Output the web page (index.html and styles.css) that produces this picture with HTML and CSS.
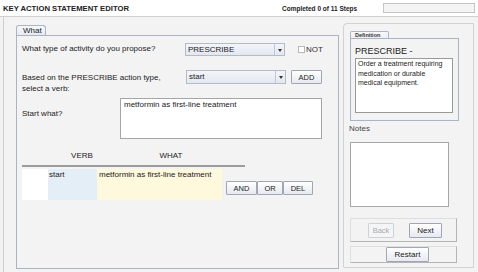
FILE: index.html
```html
<!DOCTYPE html>
<html lang="en">
<head>
    <meta charset="UTF-8">
    <title>Key Action Statement Editor</title>
    <link rel="stylesheet" href="styles.css">
</head>
<body>
    <div class="topbar">
        <div class="app-title">KEY ACTION STATEMENT EDITOR</div>
        <div class="status">Completed 0 of 11 Steps</div>
        <div class="progress"></div>
    </div>

    <div class="frame">
        <div class="main-col">
            <div class="tab">What</div>
            <div class="tab-body">
                <div class="row row-activity">
                    <div class="label">What type of activity do you propose?</div>
                    <div class="select">PRESCRIBE<span class="arrow"></span></div>
                    <label class="check"><span class="box"></span>NOT</label>
                </div>
                <div class="row row-verb">
                    <div class="label">Based on the PRESCRIBE action type,<br>select a verb:</div>
                    <div class="select">start<span class="arrow"></span></div>
                    <button class="btn btn-add">ADD</button>
                </div>
                <div class="row row-what">
                    <div class="label label-what">Start what?</div>
                    <div class="textbox">metformin as first-line treatment</div>
                </div>

                <div class="table-head">
                    <div class="th th-verb">VERB</div>
                    <div class="th th-what">WHAT</div>
                </div>
                <div class="table-row">
                    <div class="cell cell-blank"></div>
                    <div class="cell cell-verb">start</div>
                    <div class="cell cell-what">metformin as first-line treatment</div>
                    <div class="row-btns">
                        <button class="btn btn-and">AND</button>
                        <button class="btn btn-or">OR</button>
                        <button class="btn btn-del">DEL</button>
                    </div>
                </div>
            </div>
        </div>

        <div class="side">
            <div class="def-tab">Definition</div>
            <div class="def-body">
                <div class="def-title">PRESCRIBE -</div>
                <div class="def-text">Order a treatment requiring medication or durable medical equipment.</div>
            </div>
            <div class="notes-label">Notes</div>
            <div class="notes"></div>
            <div class="nav-group">
                <button class="btn btn-back" disabled>Back</button>
                <button class="btn btn-next">Next</button>
            </div>
            <div class="nav-group nav-restart">
                <button class="btn btn-restart">Restart</button>
            </div>
        </div>
    </div>
</body>
</html>
```

FILE: styles.css
```css
/* Global */
body {
    margin: 0;
    font-family: "Liberation Sans", Arial, sans-serif;
    background-color: #f3f3f3;
    color: #222;
    font-size: 8px;
    height: 272px;
    overflow: hidden;
}

button {
    font-family: inherit;
    cursor: pointer;
    margin: 0;
}

/* Top bar */
.topbar {
    display: flex;
    align-items: center;
    height: 16px;
    background: #ffffff;
    border-bottom: 1px solid #d0d0d0;
}

.app-title {
    padding-left: 3px;
    font-size: 7.7px;
    font-weight: bold;
    width: 279px;
}

.status {
    font-size: 6.5px;
    font-weight: bold;
    width: 101px;
}

.progress {
    width: 90px;
    height: 8px;
    border: 1px solid #c4c4c4;
    background: #f4f4f4;
}

/* Frame */
.frame {
    display: flex;
    margin-left: 3px;
    border-left: 1px solid #cfcfcf;
    height: 255px;
}

.main-col {
    padding-left: 12px;
    padding-top: 8px;
}

.tab {
    display: inline-block;
    width: 22px;
    height: 9px;
    padding-left: 6px;
    line-height: 10px;
    font-size: 8px;
    background: linear-gradient(#f6f8fb, #e7ebf1);
    border: 1px solid #a9b4c6;
    border-bottom: none;
    border-radius: 3px 3px 0 0;
    vertical-align: bottom;
}

.tab-body {
    width: 323px;
    height: 234px;
    border: 1px solid #a9b4c6;
    padding-left: 5px;
    box-sizing: border-box;
}

/* Form rows */
.row {
    display: flex;
    align-items: flex-start;
}

.label {
    width: 163px;
    line-height: 11px;
}

.row-activity {
    margin-top: 7px;
}

.row-activity .label {
    margin-top: 0;
}

.row-verb {
    margin-top: 14px;
}

.row-verb .label {
    margin-top: 2px;
}

.row-what {
    margin-top: 4px;
}

.label-what {
    width: 98px;
    margin-top: 10px;
}

.select {
    position: relative;
    width: 96px;
    height: 11px;
    line-height: 11px;
    padding-left: 2px;
    border: 1px solid #b3bacb;
    background: linear-gradient(#f3f5fa, #e3e7f0);
}

.row-verb .select {
    margin-left: 1px;
    height: 12px;
    line-height: 12px;
}

.arrow {
    position: absolute;
    right: 0;
    top: 0;
    bottom: 0;
    width: 9px;
    border-left: 1px solid #c2c7d4;
}

.arrow::after {
    content: "";
    position: absolute;
    left: 3px;
    top: 5px;
    border-left: 2px solid transparent;
    border-right: 2px solid transparent;
    border-top: 3px solid #333;
}

.check {
    display: flex;
    align-items: center;
    margin-left: 13px;
    margin-top: 1px;
    height: 11px;
    color: #333;
}

.box {
    width: 5px;
    height: 5px;
    border: 1px solid #b8b8b8;
    background: #fff;
    margin-right: 1px;
}

.btn {
    height: 14px;
    padding: 0;
    font-size: 7.5px;
    color: #222;
    border: 1px solid #9fa6b6;
    background: linear-gradient(#ffffff, #e6e9f0);
    border-radius: 1px;
}

.btn-add {
    width: 31px;
    margin-left: 5px;
}

.textbox {
    width: 194px;
    height: 37px;
    padding: 1px 3px;
    background: #fff;
    border: 1px solid #a6a6a6;
    line-height: 10px;
}

/* Table */
.table-head {
    display: flex;
    width: 223px;
    margin-top: 11px;
    border-bottom: 2px solid #9c9c9c;
    height: 15px;
    line-height: 12px;
}

.th-verb {
    width: 94px;
    text-align: center;
    padding-left: 26px;
    box-sizing: border-box;
}

.th-what {
    width: 110px;
    text-align: center;
}

.table-row {
    display: flex;
    margin-top: 2px;
    height: 31px;
}

.cell {
    line-height: 12px;
}

.cell-blank {
    width: 26px;
    background: #ffffff;
}

.cell-verb {
    width: 48px;
    padding-left: 1px;
    background: #e3eef7;
}

.cell-what {
    width: 123px;
    padding-left: 2px;
    background: #fef8dc;
}

.row-btns {
    display: flex;
    margin-left: 4px;
    margin-top: 12px;
}

.btn-and {
    width: 31px;
}

.btn-or {
    width: 26px;
}

.btn-del {
    width: 30px;
}

/* Side panel */
.side {
    width: 131px;
    height: 245px;
    margin-left: 4px;
    margin-top: 6px;
    border: 1px solid #d2d2d2;
    border-radius: 4px 0 0 0;
    box-sizing: border-box;
    padding-left: 6px;
}

.def-tab {
    display: inline-block;
    margin-top: 7px;
    width: 33px;
    height: 6px;
    padding-left: 4px;
    font-size: 5.5px;
    font-weight: bold;
    line-height: 7px;
    color: #333;
    border: 1px solid #a9b4c6;
    border-bottom: none;
    border-radius: 2px 2px 0 0;
    background: linear-gradient(#f8f9fb, #eceff4);
    vertical-align: bottom;
}

.def-body {
    width: 109px;
    height: 83px;
    border: 1px solid #a9b4c6;
    box-sizing: border-box;
    padding-left: 4px;
}

.def-title {
    margin-top: 7px;
    font-size: 9px;
    line-height: 10px;
    color: #222;
}

.def-text {
    width: 92px;
    height: 53px;
    margin-top: 2px;
    padding: 0 2px;
    background: #fff;
    border: 1px solid #999;
    font-size: 7px;
    line-height: 9.5px;
}

.notes-label {
    margin-top: 3px;
    margin-left: -1px;
    line-height: 10px;
    color: #444;
}

.notes {
    width: 97px;
    height: 63px;
    margin-top: 8px;
    background: #fff;
    border: 1px solid #a6a6a6;
}

.nav-group {
    display: flex;
    align-items: center;
    width: 107px;
    height: 24px;
    margin-top: 11px;
    border-top: 1px solid #dedede;
    border-left: 1px solid #dedede;
    border-bottom: 1px solid #b4b4b4;
    border-right: 1px solid #b4b4b4;
    padding-left: 17px;
    box-sizing: border-box;
}

.btn-back {
    width: 26px;
    height: 15px;
    color: #aaa;
    border-color: #cfd2d8;
    background: #f4f5f7;
}

.btn-next {
    width: 33px;
    height: 15px;
    margin-left: 15px;
    font-size: 8px;
}

.nav-restart {
    margin-top: 4px;
    height: 17px;
    padding-left: 35px;
}

.btn-restart {
    width: 43px;
    height: 15px;
    font-size: 8px;
}
```
